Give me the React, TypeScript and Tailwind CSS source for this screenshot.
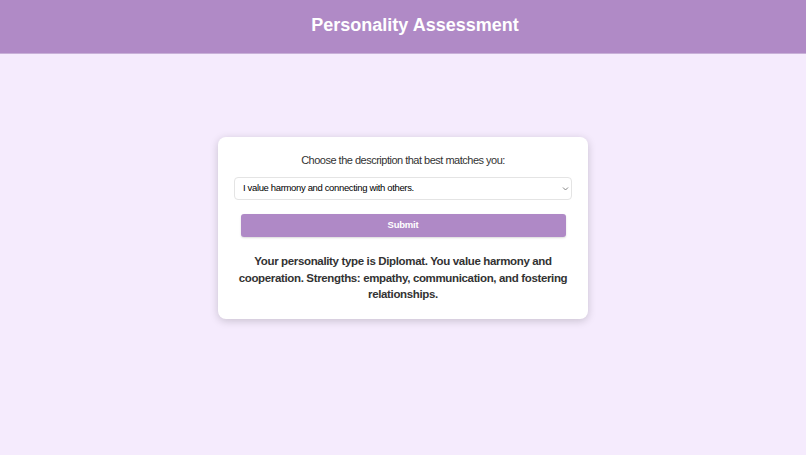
import React, { useState } from 'react';

const OPTIONS = [
  { value: 'analyst', label: 'I enjoy solving problems with logic and analysis.' },
  { value: 'diplomat', label: 'I value harmony and connecting with others.' },
  { value: 'sentinel', label: 'I prefer structure, order and reliability.' },
  { value: 'explorer', label: 'I love adventure and trying new things.' },
];

const RESULTS: Record<string, string> = {
  analyst: 'Your personality type is Analyst. You value logic and reason. Strengths: critical thinking, planning, and problem solving.',
  diplomat: 'Your personality type is Diplomat. You value harmony and cooperation. Strengths: empathy, communication, and fostering relationships.',
  sentinel: 'Your personality type is Sentinel. You value order and stability. Strengths: reliability, organization, and diligence.',
  explorer: 'Your personality type is Explorer. You value freedom and spontaneity. Strengths: adaptability, creativity, and courage.',
};

const App = () => {
  const [choice, setChoice] = useState('diplomat');
  const [result, setResult] = useState<string | null>(RESULTS.diplomat);

  return (
    <div className="min-h-screen bg-[#f5ebfd] font-['Liberation_Sans',Arial,sans-serif] text-[#333]">
      <header className="h-[54px] bg-[#b08ac6] flex items-center justify-center pl-6 pb-[2px] border-b border-[#c8b0d8]">
        <h1 className="text-[18px] font-bold text-white">Personality Assessment</h1>
      </header>

      <main className="flex justify-center pt-[83px]">
        <div className="w-[370px] bg-white rounded-lg shadow-[0_2px_8px_rgba(0,0,0,0.18)] px-4 pt-[15px] pb-[16px] flex flex-col items-center">
          <label className="text-[11px] tracking-[-0.5px] text-[#333] leading-4">Choose the description that best matches you:</label>
          <div className="relative w-full mt-[9px]">
            <select
              value={choice}
              onChange={e => setChoice(e.target.value)}
              className="block w-full h-[23px] appearance-none rounded-[4px] border border-[#e4e4e4] bg-white pl-2 pr-6 text-[9.5px] tracking-[-0.35px] text-black outline-none"
            >
              {OPTIONS.map(o => (
                <option key={o.value} value={o.value}>{o.label}</option>
              ))}
            </select>
            <svg className="pointer-events-none absolute right-[3px] top-1/2 -translate-y-1/2" width="7" height="5" viewBox="0 0 7 5">
              <path d="M1 1 L3.5 3.5 L6 1" fill="none" stroke="#777" strokeWidth="0.9" />
            </svg>
          </div>
          <button
            onClick={() => setResult(RESULTS[choice])}
            className="mt-[14px] w-[325px] h-[23px] rounded-[3px] bg-[#af89c6] text-white text-[9.5px] tracking-[-0.2px] font-bold shadow-[0_1px_2px_rgba(0,0,0,0.15)]"
          >
            Submit
          </button>
          {result && (
            <p className="mt-[16px] text-[11.5px] tracking-[-0.35px] font-bold leading-[16.5px] text-center text-[#333]">{result}</p>
          )}
        </div>
      </main>
    </div>
  );
};

export default App;
